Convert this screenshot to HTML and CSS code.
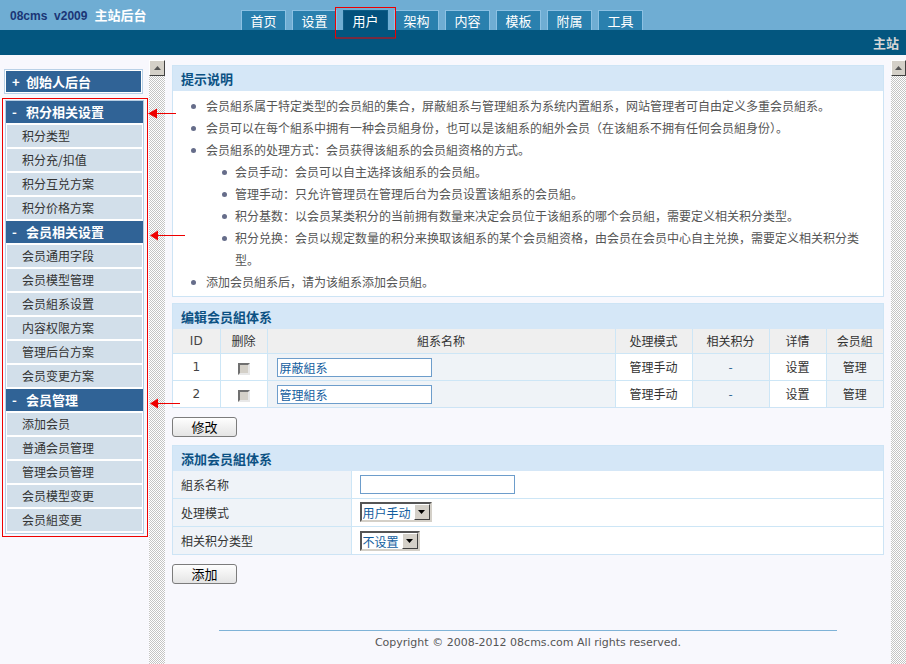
FILE: index.html
```html
<!DOCTYPE html>
<html lang="zh-CN">
<head>
    <meta charset="UTF-8">
    <title>08cms v2009 主站后台</title>
    <link rel="stylesheet" href="styles.css">
</head>
<body>
    <div class="topbar">
        <div class="logo"><span class="ver">08cms&nbsp; v2009</span>主站后台</div>
        <ul class="tabs">
            <li>首页</li>
            <li>设置</li>
            <li class="on">用户</li>
            <li>架构</li>
            <li>内容</li>
            <li>模板</li>
            <li>附属</li>
            <li>工具</li>
        </ul>
    </div>
    <div class="subbar">主站</div>

    <div class="main">
        <div class="side">
            <div class="menu-top">
                <div class="menu-head"><span class="sign">+</span>创始人后台</div>
            </div>
            <div class="mark-box">
                <div class="menu">
                    <div class="menu-head"><span class="sign">-</span>积分相关设置</div>
                    <a class="menu-item">积分类型</a>
                    <a class="menu-item">积分充/扣值</a>
                    <a class="menu-item">积分互兑方案</a>
                    <a class="menu-item">积分价格方案</a>
                    <div class="menu-head"><span class="sign">-</span>会员相关设置</div>
                    <a class="menu-item">会员通用字段</a>
                    <a class="menu-item">会员模型管理</a>
                    <a class="menu-item">会员組系设置</a>
                    <a class="menu-item">内容权限方案</a>
                    <a class="menu-item">管理后台方案</a>
                    <a class="menu-item">会员变更方案</a>
                    <div class="menu-head"><span class="sign">-</span>会员管理</div>
                    <a class="menu-item">添加会员</a>
                    <a class="menu-item">普通会员管理</a>
                    <a class="menu-item">管理会员管理</a>
                    <a class="menu-item">会员模型变更</a>
                    <a class="menu-item">会员組变更</a>
                </div>
            </div>
        </div>

        <div class="vscroll"><div class="sbtn"><svg width="7" height="4" viewBox="0 0 7 4"><path d="M3.5 0L7 4H0z" fill="#555"/></svg></div></div>

        <div class="content">
            <div class="panel">
                <div class="panel-head">提示说明</div>
                <ul class="tips">
                    <li>会员組系属于特定类型的会员組的集合，屏蔽組系与管理組系为系统内置組系，网站管理者可自由定义多重会员組系。</li>
                    <li>会员可以在每个組系中拥有一种会员組身份，也可以是该組系的組外会员（在该組系不拥有任何会员組身份）。</li>
                    <li>会员組系的处理方式：会员获得该組系的会员組资格的方式。
                        <ul>
                            <li>会员手动：会员可以自主选择该組系的会员組。</li>
                            <li>管理手动：只允许管理员在管理后台为会员设置该組系的会员組。</li>
                            <li>积分基数：以会员某类积分的当前拥有数量来决定会员位于该組系的哪个会员組，需要定义相关积分类型。</li>
                            <li>积分兑换：会员以规定数量的积分来换取该組系的某个会员組资格，由会员在会员中心自主兑换，需要定义相关积分类型。</li>
                        </ul>
                    </li>
                    <li>添加会员組系后，请为该組系添加会员組。</li>
                </ul>
            </div>

            <div class="panel gap">
                <div class="panel-head">编辑会员組体系</div>
                <table class="grid">
                    <colgroup>
                        <col style="width:47px"><col style="width:47px"><col><col style="width:77px">
                        <col style="width:77px"><col style="width:57px"><col style="width:57px">
                    </colgroup>
                    <tr>
                        <th class="num">ID</th><th>删除</th><th>組系名称</th><th>处理模式</th><th>相关积分</th><th>详情</th><th>会员組</th>
                    </tr>
                    <tr>
                        <td class="num">1</td>
                        <td><input type="checkbox" class="chk" disabled></td>
                        <td class="name alt"><input type="text" class="txt" value="屏蔽組系"></td>
                        <td>管理手动</td>
                        <td class="alt dash">-</td>
                        <td>设置</td>
                        <td class="alt">管理</td>
                    </tr>
                    <tr>
                        <td class="num">2</td>
                        <td><input type="checkbox" class="chk" disabled></td>
                        <td class="name alt"><input type="text" class="txt" value="管理組系"></td>
                        <td>管理手动</td>
                        <td class="alt dash">-</td>
                        <td>设置</td>
                        <td class="alt">管理</td>
                    </tr>
                </table>
            </div>
            <button class="btn">修改</button>

            <div class="panel gap2">
                <div class="panel-head">添加会员組体系</div>
                <table class="form">
                    <tr>
                        <td class="label">組系名称</td>
                        <td><input type="text" class="txt"></td>
                    </tr>
                    <tr>
                        <td class="label">处理模式</td>
                        <td>
                            <span class="sel w72">
                                <select><option>用户手动</option></select>
                                <span class="sel-btn"><svg width="7" height="4" viewBox="0 0 7 4"><path d="M0 0H7L3.5 4z" fill="#000"/></svg></span>
                            </span>
                        </td>
                    </tr>
                    <tr>
                        <td class="label">相关积分类型</td>
                        <td>
                            <span class="sel w60">
                                <select><option>不设置</option></select>
                                <span class="sel-btn"><svg width="7" height="4" viewBox="0 0 7 4"><path d="M0 0H7L3.5 4z" fill="#000"/></svg></span>
                            </span>
                        </td>
                    </tr>
                </table>
            </div>
            <button class="btn">添加</button>

            <div class="foot">Copyright © 2008-2012 08cms.com All rights reserved.</div>
        </div>

        <div class="vscroll right"><div class="sbtn"><svg width="7" height="4" viewBox="0 0 7 4"><path d="M3.5 0L7 4H0z" fill="#555"/></svg></div></div>
    </div>

    <!-- red review marks drawn over the page -->
    <svg class="marks" width="906" height="664" viewBox="0 0 906 664">
        <rect x="335.5" y="7.5" width="60" height="30.5" fill="none" stroke="#e00"/>
        <g stroke="#e00" stroke-width="1">
            <line x1="155" y1="113.5" x2="176" y2="113.5"/>
            <line x1="157" y1="235.5" x2="185" y2="235.5"/>
            <line x1="157" y1="403.5" x2="180" y2="403.5"/>
        </g>
        <g fill="#e00">
            <path d="M148 113.5L157 108.5V118.5z"/>
            <path d="M150 235.5L158 230.5V240.5z"/>
            <path d="M150 403.5L158 398.5V408.5z"/>
        </g>
    </svg>
</body>
</html>
```

FILE: styles.css
```css
* {
    box-sizing: border-box;
}

body {
    margin: 0;
    width: 906px;
    height: 664px;
    overflow: hidden;
    position: relative;
    background: #f8f8fd;
    font-family: "Noto Sans CJK SC", sans-serif;
    font-size: 12px;
    color: #333;
}

/* header */
.topbar {
    height: 30px;
    background: #6fadd3;
    display: flex;
}

.logo {
    width: 241px;
    flex: none;
    padding: 5px 0 0 10px;
    font-size: 13px;
    font-weight: bold;
    line-height: 20px;
    color: #fff;
}

.ver {
    font-family: "Liberation Sans", Arial, sans-serif;
    font-size: 12px;
    color: #1b3676;
    margin-right: 7px;
}

.tabs {
    list-style: none;
    margin: 0;
    padding: 0;
    display: flex;
    gap: 6px;
    align-self: flex-end;
}

.tabs li {
    width: 45px;
    height: 20px;
    border: 1px solid #8cc1e3;
    border-bottom: 0;
    background: #2a80ae;
    color: #fff;
    font-size: 13px;
    line-height: 19px;
    text-align: center;
}

.tabs li.on {
    background: #03517c;
    border-color: #0d5c86;
}

.subbar {
    height: 25px;
    background: #03567f;
    color: #d6d6d6;
    font-size: 13px;
    font-weight: bold;
    line-height: 25px;
    text-align: right;
    padding-right: 7px;
}

.main {
    display: flex;
    height: 609px;
}

/* left menu */
.side {
    width: 149px;
    flex: none;
    padding-top: 14px;
}

.menu-top {
    margin-left: 4px;
    width: 139px;
    border: 1px solid #b9d1e7;
    padding: 1px;
    background: #fff;
}

.menu-top .menu-head {
    height: 21px;
    line-height: 21px;
    margin: 0;
}

.mark-box {
    margin: 4px 0 0 2px;
    width: 146px;
    border: 1px solid #e00;
    padding: 1px 3px 2px 2px;
}

.menu {
    border: 1px solid #b6cde3;
    background: #fff;
}

.menu-head {
    height: 22px;
    line-height: 22px;
    margin-bottom: 2px;
    padding-left: 6px;
    background: #306396;
    color: #fff;
    font-size: 13px;
    font-weight: bold;
}

.menu-item + .menu-head {
    margin-top: 1px;
}

.sign {
    display: inline-block;
    width: 14px;
}

.menu-item {
    display: block;
    height: 22px;
    line-height: 22px;
    margin: 0 1px 2px;
    padding-left: 15px;
    background: #d2dfea;
    color: #333;
    text-decoration: none;
}

/* fake frame scrollbars */
.vscroll {
    width: 16px;
    flex: none;
    margin-top: 5px;
    background: repeating-conic-gradient(#c4c4c4 0 25%, #fff 0 50%) 0 0 / 2px 2px;
}

.vscroll.right {
    width: 15px;
}

.sbtn {
    height: 16px;
    background: #d4d0c8;
    border: 1px solid;
    border-color: #fff #404040 #404040 #fff;
    display: flex;
    align-items: center;
    justify-content: center;
}

/* content */
.content {
    flex: 1;
    min-width: 0;
    padding: 10px 7px 0;
}

.panel {
    border: 1px solid #cde4f5;
    background: #fff;
}

.panel.gap {
    margin-top: 6px;
}

.panel.gap2 {
    margin-top: 8px;
}

.panel-head {
    height: 25px;
    line-height: 25px;
    padding-left: 8px;
    background: #d5e7f7;
    color: #0b5183;
    font-size: 13px;
    font-weight: bold;
}

.tips {
    list-style: none;
    margin: 0;
    padding: 4px 16px 3px 0;
    line-height: 22px;
    color: #555;
}

.tips li {
    position: relative;
    padding-left: 33px;
}

.tips li::before {
    content: "";
    position: absolute;
    left: 18px;
    top: 9px;
    width: 5px;
    height: 5px;
    border-radius: 50%;
    background: #666d8a;
}

.tips ul {
    list-style: none;
    margin: 0;
    padding: 0;
}

.tips ul li {
    padding-left: 29px;
}

.tips ul li::before {
    left: 16px;
}

table {
    width: 100%;
    border-collapse: collapse;
}

.grid {
    table-layout: fixed;
}

.grid th,
.grid td {
    border: 1px solid #cde6f6;
    text-align: center;
    padding: 0;
}

.grid th {
    height: 24px;
    background: #efefef;
    font-weight: normal;
    color: #333;
    border-top: 0;
}

.grid td {
    height: 27px;
    color: #333;
}

.grid tr > :first-child,
.form tr > :first-child {
    border-left: 0;
}

.grid tr > :last-child,
.form tr > :last-child {
    border-right: 0;
}

.grid tr:last-child td,
.form tr:last-child td {
    border-bottom: 0;
}

.grid .num {
    font-family: "DejaVu Sans", sans-serif;
    color: #444;
}

.grid .alt {
    background: #eff3f7;
}

.grid .name {
    text-align: left;
    padding-left: 9px;
}

.grid .dash {
    color: #1a5a8c;
}

.txt {
    width: 155px;
    height: 19px;
    margin: 0;
    padding: 0 2px;
    border: 1px solid #6d9dcb;
    font-family: "Noto Sans CJK SC", sans-serif;
    font-size: 12px;
    color: #125d9e;
    vertical-align: middle;
}

.chk {
    appearance: none;
    width: 12px;
    height: 12px;
    margin: 0;
    background: #d4d0c8;
    border: 2px solid;
    border-color: #707070 #e8e8e8 #e8e8e8 #707070;
    vertical-align: middle;
}

.form td {
    border: 1px solid #cde6f6;
    border-top: 0;
    height: 28px;
    padding: 0 0 0 8px;
}

.form tr:first-child td {
    height: 27px;
}

.form .label {
    width: 178px;
    background: #eff3f8;
    color: #333;
    padding-left: 8px;
}

.sel {
    display: inline-flex;
    align-items: stretch;
    height: 20px;
    border: 2px solid;
    border-color: #555 #d4d0c8 #d4d0c8 #555;
    background: #fff;
    vertical-align: middle;
}

.sel select {
    appearance: none;
    flex: 1;
    min-width: 0;
    border: 0;
    margin: 0;
    padding: 0 1px;
    background: #fff;
    font-family: "Noto Sans CJK SC", sans-serif;
    font-size: 12px;
    color: #125d9e;
    outline: none;
}

.sel.w72 {
    width: 72px;
}

.sel.w60 {
    width: 60px;
}

.sel-btn {
    width: 16px;
    flex: none;
    background: #d4d0c8;
    border: 1px solid;
    border-color: #fff #404040 #404040 #fff;
    display: flex;
    align-items: center;
    justify-content: center;
}

.btn {
    display: block;
    width: 65px;
    height: 20px;
    margin-top: 9px;
    padding: 0;
    border: 1px solid #7c7c7c;
    border-radius: 3px;
    background: linear-gradient(#fefefe, #e4e4e4);
    font-family: "Noto Sans CJK SC", sans-serif;
    font-size: 13px;
    line-height: 18px;
    color: #000;
}

.foot {
    width: 618px;
    margin: 46px auto 0;
    padding-top: 5px;
    border-top: 1px solid #7fb3d7;
    text-align: center;
    font-family: "DejaVu Sans", sans-serif;
    font-size: 11px;
    color: #555;
}

.marks {
    position: absolute;
    left: 0;
    top: 0;
    pointer-events: none;
}
```
